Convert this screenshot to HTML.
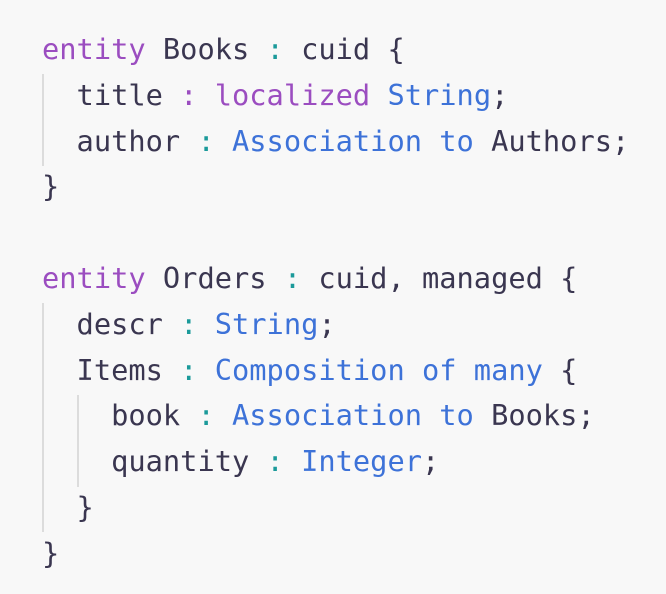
<!DOCTYPE html>
<html><head><style>
html,body{margin:0;padding:0;background:#f8f8f8;width:666px;height:594px;overflow:hidden}
pre{margin:0;position:absolute;left:42px;top:27px;font-family:"DejaVu Sans Mono","Liberation Mono",monospace;font-size:28.7px;line-height:45.8px;color:#3a3650}
.k{color:#9b4dc0}.t{color:#3d72d8}.p{color:#1b9a9a}.m{color:#9b4dc0}
.g{position:absolute;width:2px;background:#dcdcdc}
</style></head><body>
<div class="g" style="left:42px;top:74px;height:92px"></div>
<div class="g" style="left:42px;top:303px;height:229px"></div>
<div class="g" style="left:77px;top:395px;height:92px"></div>
<pre><span class="k">entity</span> Books <span class="p">:</span> cuid {
  title <span class="m">:</span> <span class="k">localized</span> <span class="t">String</span>;
  author <span class="p">:</span> <span class="t">Association to</span> Authors;
}

<span class="k">entity</span> Orders <span class="p">:</span> cuid, managed {
  descr <span class="p">:</span> <span class="t">String</span>;
  Items <span class="p">:</span> <span class="t">Composition of many</span> {
    book <span class="p">:</span> <span class="t">Association to</span> Books;
    quantity <span class="p">:</span> <span class="t">Integer</span>;
  }
}</pre>
</body></html>
